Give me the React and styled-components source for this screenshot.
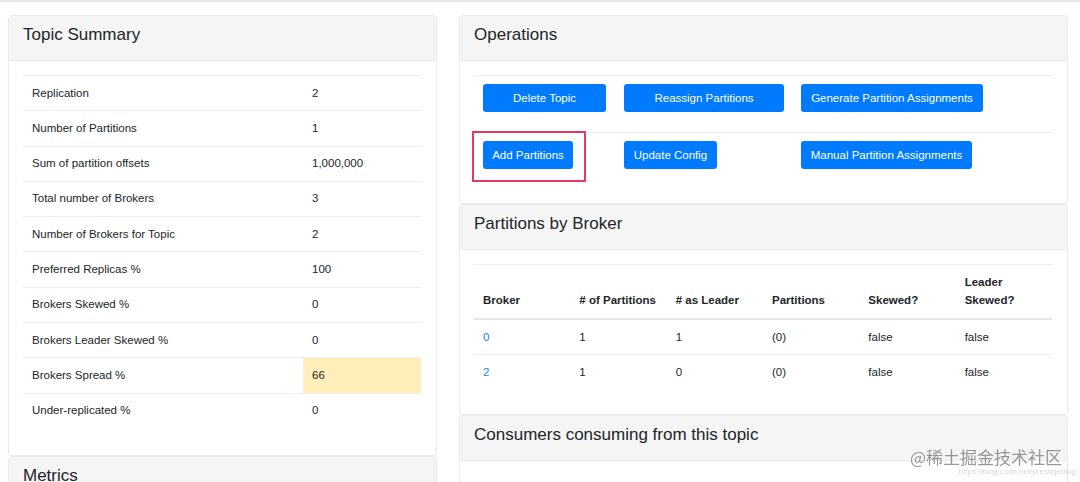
import React from 'react';
import styled, { createGlobalStyle } from 'styled-components';

const GlobalStyle = createGlobalStyle`
    body {
        margin: 0;
        background: #fff;
        font-family: "Liberation Sans", Arial, sans-serif;
        color: #212529;
        font-size: 11.5px;
    }
`

const summary = [
    ['Replication', '2'],
    ['Number of Partitions', '1'],
    ['Sum of partition offsets', '1,000,000'],
    ['Total number of Brokers', '3'],
    ['Number of Brokers for Topic', '2'],
    ['Preferred Replicas %', '100'],
    ['Brokers Skewed %', '0'],
    ['Brokers Leader Skewed %', '0'],
    ['Brokers Spread %', '66', true],
    ['Under-replicated %', '0'],
]

const operations = [
    [
        { label: 'Delete Topic', width: 123 },
        { label: 'Reassign Partitions', width: 160 },
        { label: 'Generate Partition Assignments', width: 182 },
    ],
    [
        { label: 'Add Partitions', width: 90, marked: true },
        { label: 'Update Config', width: 93 },
        { label: 'Manual Partition Assignments', width: 171 },
    ],
]

const brokers = [
    ['0', '1', '1', '(0)', 'false', 'false'],
    ['2', '1', '0', '(0)', 'false', 'false'],
]

function App() {
    return (
        <Page>
            <GlobalStyle />
            <LeftColumn>
                <Card>
                    <CardHeader><Title>Topic Summary</Title></CardHeader>
                    <CardBody>
                        <Table>
                            <colgroup>
                                <col style={{ width: 280 }} />
                                <col />
                            </colgroup>
                            <tbody>
                                {summary.map(([label, value, warn]) => (
                                    <tr key={label}>
                                        <Td>{label}</Td>
                                        <Td $warn={warn}>{value}</Td>
                                    </tr>
                                ))}
                            </tbody>
                        </Table>
                    </CardBody>
                </Card>
                <Card>
                    <CardHeader><Title>Metrics</Title></CardHeader>
                    <CardBody />
                </Card>
            </LeftColumn>

            <RightColumn>
                <Card>
                    <CardHeader><Title>Operations</Title></CardHeader>
                    <OpsBody>
                        {operations.map((row, i) => (
                            <OpsRow key={i}>
                                {row.map(op => (
                                    <OpsCell key={op.label}>
                                        {op.marked && <Marker />}
                                        <Button style={{ width: op.width }}>{op.label}</Button>
                                    </OpsCell>
                                ))}
                            </OpsRow>
                        ))}
                    </OpsBody>
                </Card>
                <Card>
                    <CardHeader><Title>Partitions by Broker</Title></CardHeader>
                    <CardBody $bottom={12}>
                        <Table $fixed>
                            <thead>
                                <tr>
                                    <Th>Broker</Th>
                                    <Th># of Partitions</Th>
                                    <Th># as Leader</Th>
                                    <Th>Partitions</Th>
                                    <Th>Skewed?</Th>
                                    <Th>Leader<br />Skewed?</Th>
                                </tr>
                            </thead>
                            <tbody>
                                {brokers.map(row => (
                                    <tr key={row[0]}>
                                        {row.map((cell, j) => (
                                            <Td key={j}>{j === 0 ? <Link href="#">{cell}</Link> : cell}</Td>
                                        ))}
                                    </tr>
                                ))}
                            </tbody>
                        </Table>
                    </CardBody>
                </Card>
                <Card>
                    <CardHeader><Title>Consumers consuming from this topic</Title></CardHeader>
                    <CardBody />
                </Card>
            </RightColumn>

            <Watermark>
                @稀土掘金技术社区
                <WatermarkUrl>https://blog.csdn.net/prestigeding</WatermarkUrl>
            </Watermark>
        </Page>
    )
}

export default App;

const Page = styled.div`
    display: flex;
    gap: 22px;
    padding: 13px 12px 0 8px;
    border-top: 2px solid #e6e6e6;
`

const LeftColumn = styled.div`
    width: 429px;
    flex-shrink: 0;
`

const RightColumn = styled.div`
    width: 609px;
    flex-shrink: 0;
`

const Card = styled.div`
    background: #fff;
    border: 1px solid #ebebeb;
    border-radius: 4px;
    box-shadow: 0 1px 2px rgba(0, 0, 0, 0.04);
    overflow: hidden;
`

const CardHeader = styled.div`
    height: 45px;
    box-sizing: border-box;
    background: #f5f5f5;
    border-bottom: 1px solid #ececec;
    padding: 9px 14px 0;
`

const Title = styled.h3`
    margin: 0;
    font-size: 17px;
    font-weight: 400;
    color: #212529;
    line-height: 20px;
`

const CardBody = styled.div`
    padding: 14px 15px ${p => p.$bottom ?? 15}px 14px;
    min-height: 60px;
`

const Table = styled.table`
    width: 100%;
    border-collapse: collapse;
    margin-bottom: 12px;
    table-layout: ${p => (p.$fixed ? 'fixed' : 'auto')};
    border-top: 1px solid #eceeef;
`

const Th = styled.th`
    text-align: left;
    vertical-align: bottom;
    font-weight: 700;
    padding: 9px 8px 9px 9px;
    line-height: 17.5px;
    border-bottom: 2px solid #e3e6e8;
    color: #212529;
`

const Td = styled.td`
    padding: 8.5px 8px 8.5px 9px;
    line-height: 17.3px;
    border-top: 1px solid #eceeef;
    color: #212529;
    background: ${p => (p.$warn ? '#ffeeba' : 'transparent')};
    tr:first-child > & {
        border-top: none;
    }
`

const Link = styled.a`
    color: #1a82f0;
    text-decoration: none;
`

const OpsBody = styled.div`
    padding: 14px;
`

const OpsRow = styled.div`
    display: grid;
    grid-template-columns: 141px 177px 1fr;
    border-top: 1px solid #eceeef;
    height: 57px;
    box-sizing: border-box;
`

const OpsCell = styled.div`
    position: relative;
    padding: 8px 9px 0 9px;
`

const Button = styled.button`
    height: 28px;
    padding: 0;
    border: none;
    border-radius: 3px;
    background: #007bff;
    color: #fff;
    font-family: "Liberation Sans", Arial, sans-serif;
    font-size: 11.5px;
    cursor: pointer;
`

const Marker = styled.div`
    position: absolute;
    left: -2px;
    top: -2px;
    width: 114px;
    height: 51px;
    border: 2px solid #e33a63;
    box-sizing: border-box;
    pointer-events: none;
`

const Watermark = styled.div`
    position: fixed;
    right: 18px;
    bottom: 5px;
    font-family: "Noto Sans CJK SC", sans-serif;
    font-size: 17px;
    color: rgba(110, 110, 110, 0.7);
    line-height: 1.1;
    text-align: right;
`

const WatermarkUrl = styled.div`
    font-family: "Liberation Sans", Arial, sans-serif;
    font-size: 8px;
    color: rgba(190, 190, 190, 0.6);
    margin-top: 2px;
    margin-right: -14px;
`
